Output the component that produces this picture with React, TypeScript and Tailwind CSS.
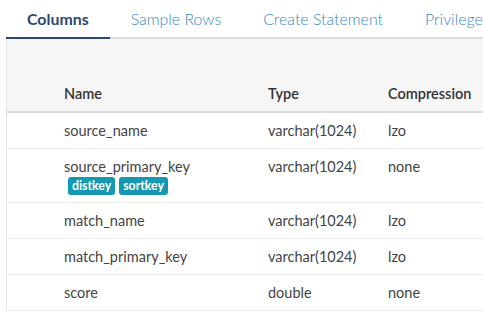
const TABS = ['Columns', 'Sample Rows', 'Create Statement', 'Privileges'];

const ROWS = [
  { name: 'source_name', type: 'varchar(1024)', comp: 'lzo', keys: [] as string[] },
  { name: 'source_primary_key', type: 'varchar(1024)', comp: 'none', keys: ['distkey', 'sortkey'] },
  { name: 'match_name', type: 'varchar(1024)', comp: 'lzo', keys: [] as string[] },
  { name: 'match_primary_key', type: 'varchar(1024)', comp: 'lzo', keys: [] as string[] },
  { name: 'score', type: 'double', comp: 'none', keys: [] as string[] },
];

export default function App() {
  return (
    <div className="w-[483px] h-[313px] overflow-hidden bg-white pl-[6px] font-['Lato',sans-serif]">
      <div className="w-[600px]">
        {/* tabs */}
        <div className="flex h-[39px] border-b-2 border-[#dcdcdc]">
          {TABS.map((t, i) => (
            <div
              key={t}
              className={`px-[21px] pt-[9px] text-[15.9px] leading-[20px] -mb-[2px] whitespace-nowrap ${
                i === 0
                  ? 'font-bold text-[#2b4a72] border-b-2 border-[#2b4a72]'
                  : 'font-light text-[#3a88cc]'
              }`}
            >
              {t}
            </div>
          ))}
        </div>

        <div className="border-l border-[#e6e6e6]">
          {/* header */}
          <div className="h-[74px] bg-[#f6f6f6] border-b-2 border-[#dcdcdc] flex items-end pb-[6px] text-[14.5px] font-semibold text-[#333]">
            <div className="w-[261px] pl-[57px]">Name</div>
            <div className="w-[120px]">Type</div>
            <div>Compression</div>
          </div>

          {ROWS.map(r => (
            <div key={r.name} className="flex border-b border-[#ececec] text-[14.5px] text-[#444] pt-[9px] pb-[8px]">
              <div className="w-[261px] pl-[57px]">
                <div className="leading-[18px]">{r.name}</div>
                {r.keys.length > 0 && (
                  <div className="flex gap-[4px] pl-[4px] mt-[1px] -mb-[1px]">
                    {r.keys.map(k => (
                      <span key={k} className="bg-[#1599b2] text-white font-bold text-[12.3px] leading-[18px] px-[4px] rounded-[3px]">
                        {k}
                      </span>
                    ))}
                  </div>
                )}
              </div>
              <div className="w-[120px] leading-[18px]">{r.type}</div>
              <div className="leading-[18px]">{r.comp}</div>
            </div>
          ))}
        </div>
      </div>
    </div>
  );
}
